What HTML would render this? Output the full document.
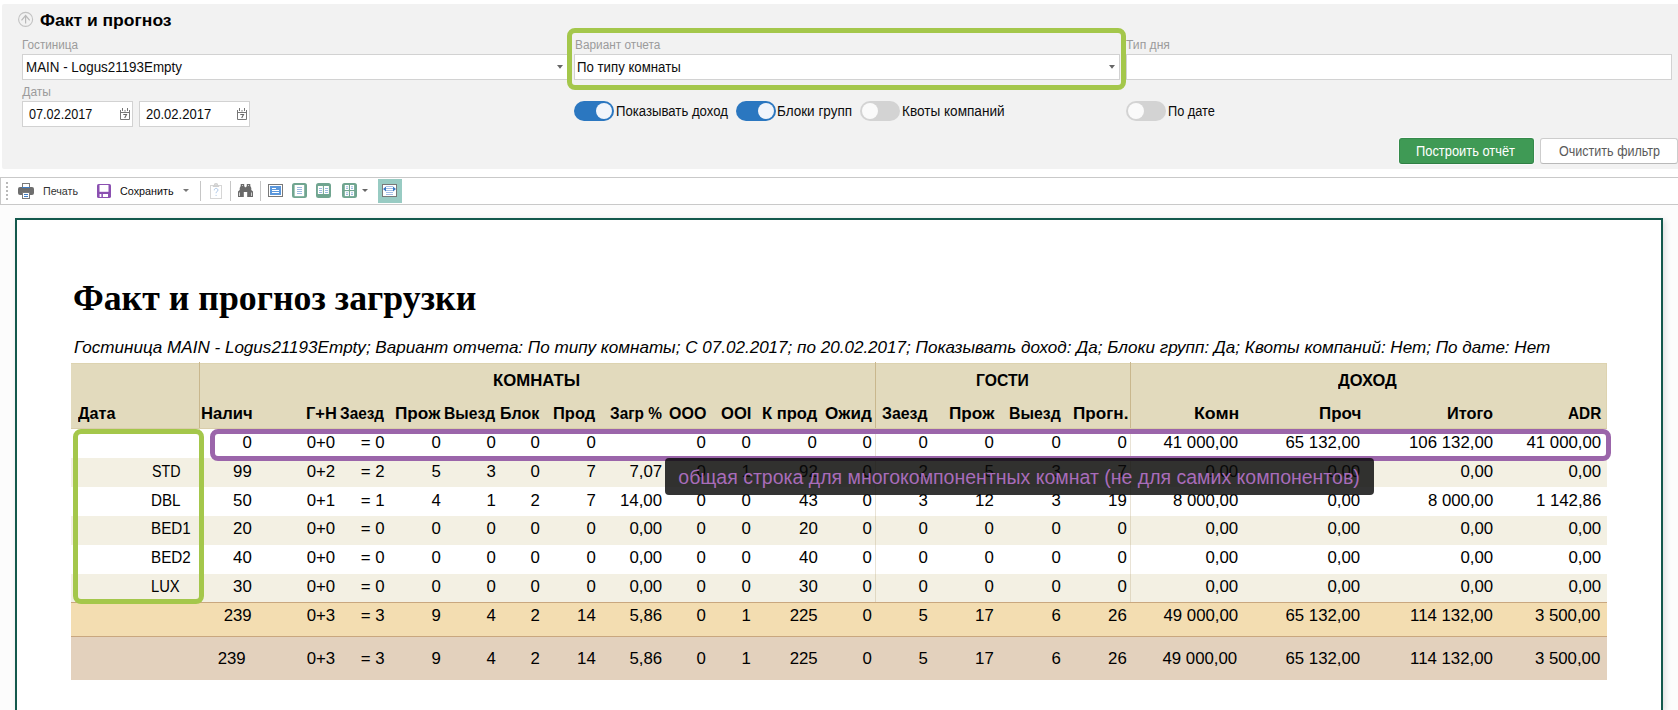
<!DOCTYPE html>
<html lang="ru"><head><meta charset="utf-8"><title>Факт и прогноз</title>
<style>
html,body{margin:0;padding:0;background:#fff;overflow:hidden;}
body{width:1678px;height:710px;overflow:hidden;position:relative;font-family:"Liberation Sans",sans-serif;}
.a{position:absolute;box-sizing:border-box;}
.t{position:absolute;white-space:nowrap;display:inline-block;}
.inp{position:absolute;box-sizing:border-box;background:#fff;border:1px solid #d2d2d2;}
.tog{position:absolute;box-sizing:border-box;width:40px;height:20px;border-radius:10px;}
.tog.on{background:#2b77c0;}
.tog.off{background:#d3d3d3;}
.tog i{position:absolute;top:2px;width:16px;height:16px;border-radius:50%;background:#f1f5fb;}
.tog.on i{right:2px;}
.tog.off i{left:2px;background:#fafafa;}
.row{position:absolute;left:71px;width:1536px;}
.vs{position:absolute;width:1px;}
</style></head><body>

<!-- filter panel -->
<div class="a" style="left:2px;top:4px;width:1676px;height:165px;background:#f2f2f2;border-radius:2px 0 0 2px;"></div>
<svg class="a" style="left:17px;top:11px;" width="17" height="17" viewBox="0 0 17 17"><circle cx="8.600" cy="8.400" r="7" fill="none" stroke="#c2c2c2" stroke-width="1.100"/><path d="M8.600 12.600V4.600M4.500 9.300L8.600 4.500l4.100 4.800" fill="none" stroke="#b9b9b9" stroke-width="1.200"/></svg>

<div class="inp" style="left:22px;top:54px;width:546px;height:26px;"></div>
<div class="inp" style="left:574px;top:54px;width:546px;height:26px;"></div>
<div class="inp" style="left:1126px;top:54px;width:546px;height:26px;"></div>
<div class="inp" style="left:22px;top:101px;width:111px;height:26px;"></div>
<div class="inp" style="left:139px;top:101px;width:111px;height:26px;"></div>
<!-- dropdown arrows -->
<svg class="a" style="left:557px;top:65px;" width="6" height="4"><path d="M0 0h6L3 3.800z" fill="#666"/></svg>
<svg class="a" style="left:1109px;top:65px;" width="6" height="4"><path d="M0 0h6L3 3.800z" fill="#666"/></svg>
<!-- calendar icons -->
<svg class="a" style="left:120px;top:108px;" width="10" height="12" viewBox="0 0 10 12"><path d="M.500 2v9.500h9V2" fill="#fff" stroke="#767676"/><path d="M.500 4.500h9" stroke="#767676"/><path d="M2.500 0v3M7.500 0v3" stroke="#767676"/><rect x="4.500" y="2" width="1" height="1.600" fill="#767676"/><path d="M3.300 6.500h3.200L4.700 10" fill="none" stroke="#666" stroke-width="1.100"/></svg>
<svg class="a" style="left:237px;top:108px;" width="10" height="12" viewBox="0 0 10 12"><path d="M.500 2v9.500h9V2" fill="#fff" stroke="#767676"/><path d="M.500 4.500h9" stroke="#767676"/><path d="M2.500 0v3M7.500 0v3" stroke="#767676"/><rect x="4.500" y="2" width="1" height="1.600" fill="#767676"/><path d="M3.300 6.500h3.200L4.700 10" fill="none" stroke="#666" stroke-width="1.100"/></svg>

<!-- green highlight around variant -->
<div class="a" style="left:567px;top:28px;width:559px;height:62px;border:5px solid #a4c74b;border-radius:8px;"></div>

<!-- toggles -->
<div class="tog on" style="left:574px;top:101px;"><i></i></div>
<div class="tog on" style="left:736px;top:101px;"><i></i></div>
<div class="tog off" style="left:860px;top:101px;"><i></i></div>
<div class="tog off" style="left:1126px;top:101px;"><i></i></div>

<!-- buttons -->
<div class="a" style="left:1399px;top:138px;width:135px;height:26px;background:#3f9a55;border:1px solid #358a4b;border-bottom-color:#2f7f44;border-radius:3px;box-shadow:0 0 0 1px rgba(255,255,255,.55);"></div>
<div class="a" style="left:1540px;top:138px;width:138px;height:26px;background:#fff;border:1px solid #cdcdcd;border-bottom-color:#b9b9b9;border-radius:3px;"></div>

<!-- toolbar -->
<div class="a" style="left:0;top:177px;width:1678px;height:28px;border-top:1px solid #c9c9c9;border-bottom:1px solid #c9c9c9;border-left:1px solid #c9c9c9;background:#fff;"></div>
<!--TB0-->
<!-- drag handle -->
<div class="a" style="left:6px;top:182px;width:2px;height:2px;background:#b9b9b9;box-shadow:0 4px #b9b9b9,0 8px #b9b9b9,0 12px #b9b9b9,0 16px #b9b9b9;"></div>
<!-- printer -->
<svg class="a" style="left:17px;top:182px;" width="18" height="18" viewBox="0 0 18 18">
<rect x="1" y="5" width="16" height="8" rx="2" fill="#6e6e6e"/>
<rect x="5.5" y="1.5" width="7" height="4" fill="#fff" stroke="#7a7a7a"/>
<rect x="5" y="5" width="8" height="1" fill="#3e7cc4"/>
<rect x="5.5" y="10.5" width="7" height="6" fill="#fff" stroke="#7a7a7a"/>
<rect x="7" y="12" width="4" height="1" fill="#3e7cc4"/><rect x="7" y="14" width="4" height="1" fill="#3e7cc4"/>
</svg>
<!-- save -->
<svg class="a" style="left:97px;top:184px;" width="14" height="14" viewBox="0 0 14 14">
<rect x="0" y="0" width="14" height="14" rx="1.6" fill="#8b50b1"/>
<rect x="2.5" y="1" width="9" height="6.8" fill="#fff"/>
<rect x="2.6" y="10" width="8.4" height="3" fill="#fff"/>
<rect x="4.4" y="10" width="1.5" height="3" fill="#8b50b1"/>
</svg>
<svg class="a" style="left:182.5px;top:189px;" width="6" height="3"><path d="M0 0h6L3 3z" fill="#777"/></svg>
<!-- separators -->
<div class="vs" style="left:200px;top:181px;height:20px;background:#c6c6c6;"></div>
<div class="vs" style="left:230px;top:181px;height:20px;background:#c6c6c6;"></div>
<div class="vs" style="left:260px;top:181px;height:20px;background:#c6c6c6;"></div>
<!-- clipboard (disabled) -->
<svg class="a" style="left:209px;top:182px;" width="14" height="18" viewBox="0 0 14 18">
<rect x="1.5" y="3.5" width="11" height="13" fill="#fff" stroke="#d6d6d6"/>
<path d="M3.800 4.300h6.400M5.500 3.300a1.500 1.500 0 0 1 3 0" fill="none" stroke="#cfcfcf" stroke-width="1.400"/>
<path d="M5.3 8.3c0-1.3.8-1.9 1.8-1.9s1.8.7 1.8 1.7c0 1.400-1.800 1.500-1.800 3.100M7.100 12.900v1" fill="none" stroke="#a9c5e8" stroke-width="1"/>
</svg>
<!-- binoculars -->
<svg class="a" style="left:238px;top:184px;" width="15" height="13" viewBox="0 0 15 13">
<path d="M2.700 0h3.500v2l.800 1.300h1l.800-1.300V0h3.500v2l1 2v2l1.700 1.500V13H9.200V8H5.800v5H0V7.500L1.700 6V4l1-2z" fill="#6a6a6a"/>
<rect x="1" y="8.500" width="1" height="3.500" fill="#d0d0d0"/><rect x="13" y="8.500" width="1" height="3.500" fill="#d0d0d0"/>
<rect x="4" y="1" width="1" height="1" fill="#ccc"/><rect x="10" y="1" width="1" height="1" fill="#ccc"/>
</svg>
<!-- icon1 -->
<svg class="a" style="left:268px;top:184px;" width="15" height="13" viewBox="0 0 15 13">
<rect x=".5" y=".5" width="14" height="12" fill="#fff" stroke="#787878"/>
<rect x="2" y="2" width="11" height="9" fill="#5b97db"/>
<rect x="4" y="4" width="4" height="1" fill="#fff"/><rect x="4" y="6" width="7" height="1" fill="#fff"/><rect x="4" y="8" width="7" height="1" fill="#fff"/>
</svg>
<!-- icon2 -->
<svg class="a" style="left:292px;top:183px;" width="15" height="15" viewBox="0 0 15 15">
<rect width="15" height="15" rx="2.500" fill="#70a590"/>
<rect x="2.600" y="2" width="9.600" height="11.200" fill="#fff"/>
<g fill="#9bb9e0"><rect x="5" y="4" width="5" height="1"/><rect x="5" y="6" width="5" height="1"/><rect x="5" y="8" width="5" height="1"/><rect x="5" y="10" width="5" height="1"/></g>
</svg>
<!-- icon3 -->
<svg class="a" style="left:316px;top:183px;" width="15" height="15" viewBox="0 0 15 15">
<rect width="15" height="15" rx="2.500" fill="#70a590"/>
<rect x="1.900" y="3" width="5" height="8" fill="#fff"/><rect x="7.900" y="3" width="5" height="8" fill="#fff"/>
<g fill="#9bb9e0"><rect x="3" y="5" width="3" height="1"/><rect x="3" y="7" width="3" height="1"/><rect x="3" y="9" width="3" height="1"/><rect x="9" y="5" width="3" height="1"/><rect x="9" y="7" width="3" height="1"/><rect x="9" y="9" width="3" height="1"/></g>
</svg>
<!-- icon4 -->
<svg class="a" style="left:342px;top:183px;" width="15" height="15" viewBox="0 0 15 15">
<rect width="15" height="15" rx="2.500" fill="#70a590"/>
<rect x="2.800" y="2" width="4.100" height="5" fill="#fff"/><rect x="8" y="2" width="4.100" height="5" fill="#fff"/>
<rect x="2.800" y="8.100" width="4.100" height="5" fill="#fff"/><rect x="8" y="8.100" width="4.100" height="5" fill="#fff"/>
<g fill="#9bb9e0"><rect x="4" y="3.300" width="2" height="1"/><rect x="4" y="5" width="2" height="1"/><rect x="9" y="3.300" width="2" height="1"/><rect x="9" y="5" width="2" height="1"/>
<rect x="4" y="9.300" width="2" height="1"/><rect x="4" y="11" width="2" height="1"/><rect x="9" y="9.300" width="2" height="1"/><rect x="9" y="11" width="2" height="1"/></g>
</svg>
<svg class="a" style="left:362px;top:189px;" width="6" height="3"><path d="M0 0h6L3 3z" fill="#666"/></svg>
<!-- icon5 highlighted -->
<div class="a" style="left:378px;top:179px;width:24px;height:24px;background:#98cbc3;"></div>
<svg class="a" style="left:382px;top:184px;" width="15" height="13" viewBox="0 0 15 13">
<rect x=".5" y=".5" width="14" height="12" fill="#fff" stroke="#787878"/>
<g fill="#a5bfe6"><rect x="4" y="2" width="7" height="1"/><rect x="3" y="4" width="9" height="1"/><rect x="3" y="6" width="9" height="1"/><rect x="4" y="8" width="7" height="1"/><rect x="4" y="10" width="7" height="1"/></g>
<path d="M1 5l3-2.500v5zM14 5l-3-2.500v5z" fill="#3a78c2"/>
</svg>
<!--TB1-->

<!-- report frame -->
<div class="a" style="left:0;top:205px;width:1678px;height:505px;background:#fcfcfc;"></div>
<div class="a" style="left:15px;top:218px;width:1648px;height:492px;border:2px solid #14594d;border-bottom:none;background:#fff;box-shadow:2px 2px 6px rgba(0,0,0,.13);"></div>

<!-- table backgrounds -->
<div class="row" style="top:363px;height:66px;background:#e2dabd;box-shadow:inset -1px 1px 0 #ddd3b0;"></div>
<div class="row" style="top:458px;height:29px;background:#f3f0e3;"></div>
<div class="row" style="top:516px;height:29px;background:#f3f0e3;"></div>
<div class="row" style="top:574px;height:28px;background:#f3f0e3;"></div>
<div class="row" style="top:602px;height:34px;background:#f3ddb1;border-top:1px solid #c9a77f;box-sizing:border-box;"></div>
<div class="row" style="top:636px;height:44px;background:#e3d1bd;border-top:1px solid #c9a77f;box-sizing:border-box;"></div>
<!-- vertical separators -->
<div class="vs" style="left:199px;top:362px;height:67px;background:#c9b78d;"></div>
<div class="vs" style="left:199px;top:429px;height:173px;background:rgba(176,156,106,.28);"></div>
<div class="vs" style="left:875px;top:362px;height:67px;background:#c9b78d;"></div>
<div class="vs" style="left:875px;top:429px;height:173px;background:rgba(176,156,106,.28);"></div>
<div class="vs" style="left:1130px;top:362px;height:67px;background:#c9b78d;"></div>
<div class="vs" style="left:1130px;top:429px;height:173px;background:rgba(176,156,106,.28);"></div>
<div class="a" style="left:71px;top:428px;width:1536px;height:1px;background:#d9cdaa;"></div>

<!-- highlight boxes -->
<div class="a" style="left:73px;top:429px;width:131px;height:175px;border:5px solid #a4c74b;border-radius:8px;z-index:3;"></div>
<div class="a" style="left:210px;top:429px;width:1401px;height:32px;border:5px solid #9b65aa;border-radius:8px;z-index:3;"></div>

<!-- tooltip -->
<div class="a" style="left:665px;top:458px;width:709px;height:37px;background:rgba(10,10,10,0.83);border-radius:4px;z-index:5;"></div>

<span class="t" style="top:11px;font:normal bold 17px/19px 'Liberation Sans', sans-serif;color:#000;left:39.80px;transform-origin:0 50%;transform:scaleX(1.0303);">Факт и прогноз</span>
<span class="t" style="top:38px;font:normal normal 12px/14px 'Liberation Sans', sans-serif;color:#9b9b9b;left:22.30px;transform-origin:0 50%;transform:scaleX(0.9763);">Гостиница</span>
<span class="t" style="top:38px;font:normal normal 12px/14px 'Liberation Sans', sans-serif;color:#9b9b9b;left:574.50px;transform-origin:0 50%;transform:scaleX(0.9853);">Вариант отчета</span>
<span class="t" style="top:38px;font:normal normal 12px/14px 'Liberation Sans', sans-serif;color:#9b9b9b;left:1126.20px;transform-origin:0 50%;transform:scaleX(1.0101);">Тип дня</span>
<span class="t" style="top:85px;font:normal normal 12px/14px 'Liberation Sans', sans-serif;color:#9b9b9b;left:22.30px;transform-origin:0 50%;">Даты</span>
<span class="t" style="top:59px;font:normal normal 14px/16px 'Liberation Sans', sans-serif;color:#0c0c0c;left:25.64px;transform-origin:0 50%;transform:scaleX(0.9553);">MAIN - Logus21193Empty</span>
<span class="t" style="top:59px;font:normal normal 14px/16px 'Liberation Sans', sans-serif;color:#0c0c0c;left:577.36px;transform-origin:0 50%;transform:scaleX(0.9443);">По типу комнаты</span>
<span class="t" style="top:106px;font:normal normal 14px/16px 'Liberation Sans', sans-serif;color:#0c0c0c;left:28.60px;transform-origin:0 50%;transform:scaleX(0.9035);">07.02.2017</span>
<span class="t" style="top:106px;font:normal normal 14px/16px 'Liberation Sans', sans-serif;color:#0c0c0c;left:145.60px;transform-origin:0 50%;transform:scaleX(0.9305);">20.02.2017</span>
<span class="t" style="top:103px;font:normal normal 14px/16px 'Liberation Sans', sans-serif;color:#0c0c0c;left:615.76px;transform-origin:0 50%;transform:scaleX(0.9401);">Показывать доход</span>
<span class="t" style="top:103px;font:normal normal 14px/16px 'Liberation Sans', sans-serif;color:#0c0c0c;left:777.24px;transform-origin:0 50%;transform:scaleX(0.9634);">Блоки групп</span>
<span class="t" style="top:103px;font:normal normal 14px/16px 'Liberation Sans', sans-serif;color:#0c0c0c;left:901.73px;transform-origin:0 50%;transform:scaleX(0.9703);">Квоты компаний</span>
<span class="t" style="top:103px;font:normal normal 14px/16px 'Liberation Sans', sans-serif;color:#0c0c0c;left:1167.99px;transform-origin:0 50%;transform:scaleX(0.9123);">По дате</span>
<span class="t" style="top:143px;font:normal normal 14px/16px 'Liberation Sans', sans-serif;color:#fff;left:1416.38px;transform-origin:0 50%;transform:scaleX(0.9196);">Построить отчёт</span>
<span class="t" style="top:143px;font:normal normal 14px/16px 'Liberation Sans', sans-serif;color:#5a5a5a;left:1558.50px;transform-origin:0 50%;transform:scaleX(0.8968);">Очистить фильтр</span>
<span class="t" style="top:185px;font:normal normal 11px/12px 'Liberation Sans', sans-serif;color:#333;left:42.50px;transform-origin:0 50%;transform:scaleX(0.9724);">Печать</span>
<span class="t" style="top:185px;font:normal normal 11px/12px 'Liberation Sans', sans-serif;color:#0c0c0c;left:120.00px;transform-origin:0 50%;transform:scaleX(0.9794);">Сохранить</span>
<span class="t" style="top:278px;font:normal bold 36px/40px 'Liberation Serif', serif;color:#000;left:73.31px;transform-origin:0 50%;transform:scaleX(0.9939);">Факт и прогноз загрузки</span>
<span class="t" style="top:338px;font:italic normal 17px/19px 'Liberation Sans', sans-serif;color:#000;left:74.00px;transform-origin:0 50%;transform:scaleX(1.0035);">Гостиница MAIN - Logus21193Empty; Вариант отчета: По типу комнаты; С 07.02.2017; по 20.02.2017; Показывать доход: Да; Блоки групп: Да; Квоты компаний: Нет; По дате: Нет</span>
<span class="t" style="top:371px;font:normal bold 16.5px/18px 'Liberation Sans', sans-serif;color:#000;left:492.99px;transform-origin:0 50%;transform:scaleX(1.0149);">КОМНАТЫ</span>
<span class="t" style="top:371px;font:normal bold 16.5px/18px 'Liberation Sans', sans-serif;color:#000;left:976.05px;transform-origin:0 50%;transform:scaleX(0.9523);">ГОСТИ</span>
<span class="t" style="top:371px;font:normal bold 16.5px/18px 'Liberation Sans', sans-serif;color:#000;left:1338.00px;transform-origin:0 50%;transform:scaleX(0.9974);">ДОХОД</span>
<span class="t" style="top:404px;font:normal bold 16.5px/18px 'Liberation Sans', sans-serif;color:#000;left:77.60px;transform-origin:0 50%;transform:scaleX(0.9792);">Дата</span>
<span class="t" style="top:404px;font:normal bold 16.5px/18px 'Liberation Sans', sans-serif;color:#000;left:200.99px;transform-origin:0 50%;transform:scaleX(1.0057);">Налич</span>
<span class="t" style="top:404px;font:normal bold 16.5px/18px 'Liberation Sans', sans-serif;color:#000;left:305.50px;transform-origin:0 50%;transform:scaleX(0.9969);">Г+Н</span>
<span class="t" style="top:404px;font:normal bold 16.5px/18px 'Liberation Sans', sans-serif;color:#000;left:339.80px;transform-origin:0 50%;transform:scaleX(0.9313);">Заезд</span>
<span class="t" style="top:404px;font:normal bold 16.5px/18px 'Liberation Sans', sans-serif;color:#000;left:394.56px;transform-origin:0 50%;transform:scaleX(1.0421);">Прож</span>
<span class="t" style="top:404px;font:normal bold 16.5px/18px 'Liberation Sans', sans-serif;color:#000;left:444.35px;transform-origin:0 50%;transform:scaleX(0.9497);">Выезд</span>
<span class="t" style="top:404px;font:normal bold 16.5px/18px 'Liberation Sans', sans-serif;color:#000;left:500.03px;transform-origin:0 50%;transform:scaleX(0.9701);">Блок</span>
<span class="t" style="top:404px;font:normal bold 16.5px/18px 'Liberation Sans', sans-serif;color:#000;left:553.00px;transform-origin:0 50%;transform:scaleX(0.9976);">Прод</span>
<span class="t" style="top:404px;font:normal bold 16.5px/18px 'Liberation Sans', sans-serif;color:#000;left:609.70px;transform-origin:0 50%;transform:scaleX(0.9331);">Загр %</span>
<span class="t" style="top:404px;font:normal bold 16.5px/18px 'Liberation Sans', sans-serif;color:#000;left:668.80px;transform-origin:0 50%;transform:scaleX(0.9698);">ООО</span>
<span class="t" style="top:404px;font:normal bold 16.5px/18px 'Liberation Sans', sans-serif;color:#000;left:721.20px;transform-origin:0 50%;transform:scaleX(1.0044);">OOI</span>
<span class="t" style="top:404px;font:normal bold 16.5px/18px 'Liberation Sans', sans-serif;color:#000;left:761.80px;transform-origin:0 50%;transform:scaleX(1.0025);">К прод</span>
<span class="t" style="top:404px;font:normal bold 16.5px/18px 'Liberation Sans', sans-serif;color:#000;left:825.30px;transform-origin:0 50%;transform:scaleX(1.0356);">Ожид</span>
<span class="t" style="top:404px;font:normal bold 16.5px/18px 'Liberation Sans', sans-serif;color:#000;left:881.70px;transform-origin:0 50%;transform:scaleX(0.9605);">Заезд</span>
<span class="t" style="top:404px;font:normal bold 16.5px/18px 'Liberation Sans', sans-serif;color:#000;left:948.66px;transform-origin:0 50%;transform:scaleX(1.0421);">Прож</span>
<span class="t" style="top:404px;font:normal bold 16.5px/18px 'Liberation Sans', sans-serif;color:#000;left:1008.54px;transform-origin:0 50%;transform:scaleX(0.9609);">Выезд</span>
<span class="t" style="top:404px;font:normal bold 16.5px/18px 'Liberation Sans', sans-serif;color:#000;left:1072.66px;transform-origin:0 50%;transform:scaleX(1.0375);">Прогн.</span>
<span class="t" style="top:404px;font:normal bold 16.5px/18px 'Liberation Sans', sans-serif;color:#000;left:1194.32px;transform-origin:0 50%;transform:scaleX(1.0763);">Комн</span>
<span class="t" style="top:404px;font:normal bold 16.5px/18px 'Liberation Sans', sans-serif;color:#000;left:1318.97px;transform-origin:0 50%;transform:scaleX(1.0251);">Проч</span>
<span class="t" style="top:404px;font:normal bold 16.5px/18px 'Liberation Sans', sans-serif;color:#000;left:1447.01px;transform-origin:0 50%;transform:scaleX(0.9900);">Итого</span>
<span class="t" style="top:404px;font:normal bold 16.5px/18px 'Liberation Sans', sans-serif;color:#000;left:1568.00px;transform-origin:0 50%;transform:scaleX(0.9293);">ADR</span>
<span class="t" style="top:434px;font:normal normal 16px/17px 'Liberation Sans', sans-serif;color:#000;right:1426.51px;transform-origin:100% 50%;transform:scaleX(1.0500);">0</span>
<span class="t" style="top:434px;font:normal normal 16px/17px 'Liberation Sans', sans-serif;color:#000;right:1342.71px;transform-origin:100% 50%;transform:scaleX(1.0500);">0+0</span>
<span class="t" style="top:434px;font:normal normal 16px/17px 'Liberation Sans', sans-serif;color:#000;right:1293.71px;transform-origin:100% 50%;transform:scaleX(1.0500);">= 0</span>
<span class="t" style="top:434px;font:normal normal 16px/17px 'Liberation Sans', sans-serif;color:#000;right:1237.51px;transform-origin:100% 50%;transform:scaleX(1.0500);">0</span>
<span class="t" style="top:434px;font:normal normal 16px/17px 'Liberation Sans', sans-serif;color:#000;right:1182.11px;transform-origin:100% 50%;transform:scaleX(1.0500);">0</span>
<span class="t" style="top:434px;font:normal normal 16px/17px 'Liberation Sans', sans-serif;color:#000;right:1138.11px;transform-origin:100% 50%;transform:scaleX(1.0500);">0</span>
<span class="t" style="top:434px;font:normal normal 16px/17px 'Liberation Sans', sans-serif;color:#000;right:1082.41px;transform-origin:100% 50%;transform:scaleX(1.0500);">0</span>
<span class="t" style="top:434px;font:normal normal 16px/17px 'Liberation Sans', sans-serif;color:#000;right:971.81px;transform-origin:100% 50%;transform:scaleX(1.0500);">0</span>
<span class="t" style="top:434px;font:normal normal 16px/17px 'Liberation Sans', sans-serif;color:#000;right:927.11px;transform-origin:100% 50%;transform:scaleX(1.0500);">0</span>
<span class="t" style="top:434px;font:normal normal 16px/17px 'Liberation Sans', sans-serif;color:#000;right:860.61px;transform-origin:100% 50%;transform:scaleX(1.0500);">0</span>
<span class="t" style="top:434px;font:normal normal 16px/17px 'Liberation Sans', sans-serif;color:#000;right:806.11px;transform-origin:100% 50%;transform:scaleX(1.0500);">0</span>
<span class="t" style="top:434px;font:normal normal 16px/17px 'Liberation Sans', sans-serif;color:#000;right:750.41px;transform-origin:100% 50%;transform:scaleX(1.0500);">0</span>
<span class="t" style="top:434px;font:normal normal 16px/17px 'Liberation Sans', sans-serif;color:#000;right:683.81px;transform-origin:100% 50%;transform:scaleX(1.0500);">0</span>
<span class="t" style="top:434px;font:normal normal 16px/17px 'Liberation Sans', sans-serif;color:#000;right:617.31px;transform-origin:100% 50%;transform:scaleX(1.0500);">0</span>
<span class="t" style="top:434px;font:normal normal 16px/17px 'Liberation Sans', sans-serif;color:#000;right:551.11px;transform-origin:100% 50%;transform:scaleX(1.0500);">0</span>
<span class="t" style="top:434px;font:normal normal 16px/17px 'Liberation Sans', sans-serif;color:#000;right:439.51px;transform-origin:100% 50%;transform:scaleX(1.0500);">41 000,00</span>
<span class="t" style="top:434px;font:normal normal 16px/17px 'Liberation Sans', sans-serif;color:#000;right:317.51px;transform-origin:100% 50%;transform:scaleX(1.0500);">65 132,00</span>
<span class="t" style="top:434px;font:normal normal 16px/17px 'Liberation Sans', sans-serif;color:#000;right:185.11px;transform-origin:100% 50%;transform:scaleX(1.0500);">106 132,00</span>
<span class="t" style="top:434px;font:normal normal 16px/17px 'Liberation Sans', sans-serif;color:#000;right:76.81px;transform-origin:100% 50%;transform:scaleX(1.0500);">41 000,00</span>
<span class="t" style="top:463px;font:normal normal 16px/17px 'Liberation Sans', sans-serif;color:#000;left:151.90px;transform-origin:0 50%;transform:scaleX(0.8936);">STD</span>
<span class="t" style="top:463px;font:normal normal 16px/17px 'Liberation Sans', sans-serif;color:#000;right:1426.51px;transform-origin:100% 50%;transform:scaleX(1.0500);">99</span>
<span class="t" style="top:463px;font:normal normal 16px/17px 'Liberation Sans', sans-serif;color:#000;right:1342.71px;transform-origin:100% 50%;transform:scaleX(1.0500);">0+2</span>
<span class="t" style="top:463px;font:normal normal 16px/17px 'Liberation Sans', sans-serif;color:#000;right:1293.71px;transform-origin:100% 50%;transform:scaleX(1.0500);">= 2</span>
<span class="t" style="top:463px;font:normal normal 16px/17px 'Liberation Sans', sans-serif;color:#000;right:1237.51px;transform-origin:100% 50%;transform:scaleX(1.0500);">5</span>
<span class="t" style="top:463px;font:normal normal 16px/17px 'Liberation Sans', sans-serif;color:#000;right:1182.11px;transform-origin:100% 50%;transform:scaleX(1.0500);">3</span>
<span class="t" style="top:463px;font:normal normal 16px/17px 'Liberation Sans', sans-serif;color:#000;right:1138.11px;transform-origin:100% 50%;transform:scaleX(1.0500);">0</span>
<span class="t" style="top:463px;font:normal normal 16px/17px 'Liberation Sans', sans-serif;color:#000;right:1082.41px;transform-origin:100% 50%;transform:scaleX(1.0500);">7</span>
<span class="t" style="top:463px;font:normal normal 16px/17px 'Liberation Sans', sans-serif;color:#000;right:1016.11px;transform-origin:100% 50%;transform:scaleX(1.0500);">7,07</span>
<span class="t" style="top:463px;font:normal normal 16px/17px 'Liberation Sans', sans-serif;color:#000;right:971.81px;transform-origin:100% 50%;transform:scaleX(1.0500);">0</span>
<span class="t" style="top:463px;font:normal normal 16px/17px 'Liberation Sans', sans-serif;color:#000;right:927.11px;transform-origin:100% 50%;transform:scaleX(1.0500);">1</span>
<span class="t" style="top:463px;font:normal normal 16px/17px 'Liberation Sans', sans-serif;color:#000;right:860.61px;transform-origin:100% 50%;transform:scaleX(1.0500);">92</span>
<span class="t" style="top:463px;font:normal normal 16px/17px 'Liberation Sans', sans-serif;color:#000;right:806.11px;transform-origin:100% 50%;transform:scaleX(1.0500);">0</span>
<span class="t" style="top:463px;font:normal normal 16px/17px 'Liberation Sans', sans-serif;color:#000;right:750.41px;transform-origin:100% 50%;transform:scaleX(1.0500);">2</span>
<span class="t" style="top:463px;font:normal normal 16px/17px 'Liberation Sans', sans-serif;color:#000;right:683.81px;transform-origin:100% 50%;transform:scaleX(1.0500);">5</span>
<span class="t" style="top:463px;font:normal normal 16px/17px 'Liberation Sans', sans-serif;color:#000;right:617.31px;transform-origin:100% 50%;transform:scaleX(1.0500);">3</span>
<span class="t" style="top:463px;font:normal normal 16px/17px 'Liberation Sans', sans-serif;color:#000;right:551.11px;transform-origin:100% 50%;transform:scaleX(1.0500);">7</span>
<span class="t" style="top:463px;font:normal normal 16px/17px 'Liberation Sans', sans-serif;color:#000;right:439.51px;transform-origin:100% 50%;transform:scaleX(1.0500);">0,00</span>
<span class="t" style="top:463px;font:normal normal 16px/17px 'Liberation Sans', sans-serif;color:#000;right:317.51px;transform-origin:100% 50%;transform:scaleX(1.0500);">0,00</span>
<span class="t" style="top:463px;font:normal normal 16px/17px 'Liberation Sans', sans-serif;color:#000;right:185.11px;transform-origin:100% 50%;transform:scaleX(1.0500);">0,00</span>
<span class="t" style="top:463px;font:normal normal 16px/17px 'Liberation Sans', sans-serif;color:#000;right:76.81px;transform-origin:100% 50%;transform:scaleX(1.0500);">0,00</span>
<span class="t" style="top:492px;font:normal normal 16px/17px 'Liberation Sans', sans-serif;color:#000;left:150.95px;transform-origin:0 50%;transform:scaleX(0.9495);">DBL</span>
<span class="t" style="top:492px;font:normal normal 16px/17px 'Liberation Sans', sans-serif;color:#000;right:1426.51px;transform-origin:100% 50%;transform:scaleX(1.0500);">50</span>
<span class="t" style="top:492px;font:normal normal 16px/17px 'Liberation Sans', sans-serif;color:#000;right:1342.71px;transform-origin:100% 50%;transform:scaleX(1.0500);">0+1</span>
<span class="t" style="top:492px;font:normal normal 16px/17px 'Liberation Sans', sans-serif;color:#000;right:1293.71px;transform-origin:100% 50%;transform:scaleX(1.0500);">= 1</span>
<span class="t" style="top:492px;font:normal normal 16px/17px 'Liberation Sans', sans-serif;color:#000;right:1237.51px;transform-origin:100% 50%;transform:scaleX(1.0500);">4</span>
<span class="t" style="top:492px;font:normal normal 16px/17px 'Liberation Sans', sans-serif;color:#000;right:1182.11px;transform-origin:100% 50%;transform:scaleX(1.0500);">1</span>
<span class="t" style="top:492px;font:normal normal 16px/17px 'Liberation Sans', sans-serif;color:#000;right:1138.11px;transform-origin:100% 50%;transform:scaleX(1.0500);">2</span>
<span class="t" style="top:492px;font:normal normal 16px/17px 'Liberation Sans', sans-serif;color:#000;right:1082.41px;transform-origin:100% 50%;transform:scaleX(1.0500);">7</span>
<span class="t" style="top:492px;font:normal normal 16px/17px 'Liberation Sans', sans-serif;color:#000;right:1016.11px;transform-origin:100% 50%;transform:scaleX(1.0500);">14,00</span>
<span class="t" style="top:492px;font:normal normal 16px/17px 'Liberation Sans', sans-serif;color:#000;right:971.81px;transform-origin:100% 50%;transform:scaleX(1.0500);">0</span>
<span class="t" style="top:492px;font:normal normal 16px/17px 'Liberation Sans', sans-serif;color:#000;right:927.11px;transform-origin:100% 50%;transform:scaleX(1.0500);">0</span>
<span class="t" style="top:492px;font:normal normal 16px/17px 'Liberation Sans', sans-serif;color:#000;right:860.61px;transform-origin:100% 50%;transform:scaleX(1.0500);">43</span>
<span class="t" style="top:492px;font:normal normal 16px/17px 'Liberation Sans', sans-serif;color:#000;right:806.11px;transform-origin:100% 50%;transform:scaleX(1.0500);">0</span>
<span class="t" style="top:492px;font:normal normal 16px/17px 'Liberation Sans', sans-serif;color:#000;right:750.41px;transform-origin:100% 50%;transform:scaleX(1.0500);">3</span>
<span class="t" style="top:492px;font:normal normal 16px/17px 'Liberation Sans', sans-serif;color:#000;right:683.81px;transform-origin:100% 50%;transform:scaleX(1.0500);">12</span>
<span class="t" style="top:492px;font:normal normal 16px/17px 'Liberation Sans', sans-serif;color:#000;right:617.31px;transform-origin:100% 50%;transform:scaleX(1.0500);">3</span>
<span class="t" style="top:492px;font:normal normal 16px/17px 'Liberation Sans', sans-serif;color:#000;right:551.11px;transform-origin:100% 50%;transform:scaleX(1.0500);">19</span>
<span class="t" style="top:492px;font:normal normal 16px/17px 'Liberation Sans', sans-serif;color:#000;right:439.51px;transform-origin:100% 50%;transform:scaleX(1.0500);">8 000,00</span>
<span class="t" style="top:492px;font:normal normal 16px/17px 'Liberation Sans', sans-serif;color:#000;right:317.51px;transform-origin:100% 50%;transform:scaleX(1.0500);">0,00</span>
<span class="t" style="top:492px;font:normal normal 16px/17px 'Liberation Sans', sans-serif;color:#000;right:185.11px;transform-origin:100% 50%;transform:scaleX(1.0500);">8 000,00</span>
<span class="t" style="top:492px;font:normal normal 16px/17px 'Liberation Sans', sans-serif;color:#000;right:76.81px;transform-origin:100% 50%;transform:scaleX(1.0500);">1 142,86</span>
<span class="t" style="top:520px;font:normal normal 16px/17px 'Liberation Sans', sans-serif;color:#000;left:150.95px;transform-origin:0 50%;transform:scaleX(0.9511);">BED1</span>
<span class="t" style="top:520px;font:normal normal 16px/17px 'Liberation Sans', sans-serif;color:#000;right:1426.51px;transform-origin:100% 50%;transform:scaleX(1.0500);">20</span>
<span class="t" style="top:520px;font:normal normal 16px/17px 'Liberation Sans', sans-serif;color:#000;right:1342.71px;transform-origin:100% 50%;transform:scaleX(1.0500);">0+0</span>
<span class="t" style="top:520px;font:normal normal 16px/17px 'Liberation Sans', sans-serif;color:#000;right:1293.71px;transform-origin:100% 50%;transform:scaleX(1.0500);">= 0</span>
<span class="t" style="top:520px;font:normal normal 16px/17px 'Liberation Sans', sans-serif;color:#000;right:1237.51px;transform-origin:100% 50%;transform:scaleX(1.0500);">0</span>
<span class="t" style="top:520px;font:normal normal 16px/17px 'Liberation Sans', sans-serif;color:#000;right:1182.11px;transform-origin:100% 50%;transform:scaleX(1.0500);">0</span>
<span class="t" style="top:520px;font:normal normal 16px/17px 'Liberation Sans', sans-serif;color:#000;right:1138.11px;transform-origin:100% 50%;transform:scaleX(1.0500);">0</span>
<span class="t" style="top:520px;font:normal normal 16px/17px 'Liberation Sans', sans-serif;color:#000;right:1082.41px;transform-origin:100% 50%;transform:scaleX(1.0500);">0</span>
<span class="t" style="top:520px;font:normal normal 16px/17px 'Liberation Sans', sans-serif;color:#000;right:1016.11px;transform-origin:100% 50%;transform:scaleX(1.0500);">0,00</span>
<span class="t" style="top:520px;font:normal normal 16px/17px 'Liberation Sans', sans-serif;color:#000;right:971.81px;transform-origin:100% 50%;transform:scaleX(1.0500);">0</span>
<span class="t" style="top:520px;font:normal normal 16px/17px 'Liberation Sans', sans-serif;color:#000;right:927.11px;transform-origin:100% 50%;transform:scaleX(1.0500);">0</span>
<span class="t" style="top:520px;font:normal normal 16px/17px 'Liberation Sans', sans-serif;color:#000;right:860.61px;transform-origin:100% 50%;transform:scaleX(1.0500);">20</span>
<span class="t" style="top:520px;font:normal normal 16px/17px 'Liberation Sans', sans-serif;color:#000;right:806.11px;transform-origin:100% 50%;transform:scaleX(1.0500);">0</span>
<span class="t" style="top:520px;font:normal normal 16px/17px 'Liberation Sans', sans-serif;color:#000;right:750.41px;transform-origin:100% 50%;transform:scaleX(1.0500);">0</span>
<span class="t" style="top:520px;font:normal normal 16px/17px 'Liberation Sans', sans-serif;color:#000;right:683.81px;transform-origin:100% 50%;transform:scaleX(1.0500);">0</span>
<span class="t" style="top:520px;font:normal normal 16px/17px 'Liberation Sans', sans-serif;color:#000;right:617.31px;transform-origin:100% 50%;transform:scaleX(1.0500);">0</span>
<span class="t" style="top:520px;font:normal normal 16px/17px 'Liberation Sans', sans-serif;color:#000;right:551.11px;transform-origin:100% 50%;transform:scaleX(1.0500);">0</span>
<span class="t" style="top:520px;font:normal normal 16px/17px 'Liberation Sans', sans-serif;color:#000;right:439.51px;transform-origin:100% 50%;transform:scaleX(1.0500);">0,00</span>
<span class="t" style="top:520px;font:normal normal 16px/17px 'Liberation Sans', sans-serif;color:#000;right:317.51px;transform-origin:100% 50%;transform:scaleX(1.0500);">0,00</span>
<span class="t" style="top:520px;font:normal normal 16px/17px 'Liberation Sans', sans-serif;color:#000;right:185.11px;transform-origin:100% 50%;transform:scaleX(1.0500);">0,00</span>
<span class="t" style="top:520px;font:normal normal 16px/17px 'Liberation Sans', sans-serif;color:#000;right:76.81px;transform-origin:100% 50%;transform:scaleX(1.0500);">0,00</span>
<span class="t" style="top:549px;font:normal normal 16px/17px 'Liberation Sans', sans-serif;color:#000;left:150.95px;transform-origin:0 50%;transform:scaleX(0.9511);">BED2</span>
<span class="t" style="top:549px;font:normal normal 16px/17px 'Liberation Sans', sans-serif;color:#000;right:1426.51px;transform-origin:100% 50%;transform:scaleX(1.0500);">40</span>
<span class="t" style="top:549px;font:normal normal 16px/17px 'Liberation Sans', sans-serif;color:#000;right:1342.71px;transform-origin:100% 50%;transform:scaleX(1.0500);">0+0</span>
<span class="t" style="top:549px;font:normal normal 16px/17px 'Liberation Sans', sans-serif;color:#000;right:1293.71px;transform-origin:100% 50%;transform:scaleX(1.0500);">= 0</span>
<span class="t" style="top:549px;font:normal normal 16px/17px 'Liberation Sans', sans-serif;color:#000;right:1237.51px;transform-origin:100% 50%;transform:scaleX(1.0500);">0</span>
<span class="t" style="top:549px;font:normal normal 16px/17px 'Liberation Sans', sans-serif;color:#000;right:1182.11px;transform-origin:100% 50%;transform:scaleX(1.0500);">0</span>
<span class="t" style="top:549px;font:normal normal 16px/17px 'Liberation Sans', sans-serif;color:#000;right:1138.11px;transform-origin:100% 50%;transform:scaleX(1.0500);">0</span>
<span class="t" style="top:549px;font:normal normal 16px/17px 'Liberation Sans', sans-serif;color:#000;right:1082.41px;transform-origin:100% 50%;transform:scaleX(1.0500);">0</span>
<span class="t" style="top:549px;font:normal normal 16px/17px 'Liberation Sans', sans-serif;color:#000;right:1016.11px;transform-origin:100% 50%;transform:scaleX(1.0500);">0,00</span>
<span class="t" style="top:549px;font:normal normal 16px/17px 'Liberation Sans', sans-serif;color:#000;right:971.81px;transform-origin:100% 50%;transform:scaleX(1.0500);">0</span>
<span class="t" style="top:549px;font:normal normal 16px/17px 'Liberation Sans', sans-serif;color:#000;right:927.11px;transform-origin:100% 50%;transform:scaleX(1.0500);">0</span>
<span class="t" style="top:549px;font:normal normal 16px/17px 'Liberation Sans', sans-serif;color:#000;right:860.61px;transform-origin:100% 50%;transform:scaleX(1.0500);">40</span>
<span class="t" style="top:549px;font:normal normal 16px/17px 'Liberation Sans', sans-serif;color:#000;right:806.11px;transform-origin:100% 50%;transform:scaleX(1.0500);">0</span>
<span class="t" style="top:549px;font:normal normal 16px/17px 'Liberation Sans', sans-serif;color:#000;right:750.41px;transform-origin:100% 50%;transform:scaleX(1.0500);">0</span>
<span class="t" style="top:549px;font:normal normal 16px/17px 'Liberation Sans', sans-serif;color:#000;right:683.81px;transform-origin:100% 50%;transform:scaleX(1.0500);">0</span>
<span class="t" style="top:549px;font:normal normal 16px/17px 'Liberation Sans', sans-serif;color:#000;right:617.31px;transform-origin:100% 50%;transform:scaleX(1.0500);">0</span>
<span class="t" style="top:549px;font:normal normal 16px/17px 'Liberation Sans', sans-serif;color:#000;right:551.11px;transform-origin:100% 50%;transform:scaleX(1.0500);">0</span>
<span class="t" style="top:549px;font:normal normal 16px/17px 'Liberation Sans', sans-serif;color:#000;right:439.51px;transform-origin:100% 50%;transform:scaleX(1.0500);">0,00</span>
<span class="t" style="top:549px;font:normal normal 16px/17px 'Liberation Sans', sans-serif;color:#000;right:317.51px;transform-origin:100% 50%;transform:scaleX(1.0500);">0,00</span>
<span class="t" style="top:549px;font:normal normal 16px/17px 'Liberation Sans', sans-serif;color:#000;right:185.11px;transform-origin:100% 50%;transform:scaleX(1.0500);">0,00</span>
<span class="t" style="top:549px;font:normal normal 16px/17px 'Liberation Sans', sans-serif;color:#000;right:76.81px;transform-origin:100% 50%;transform:scaleX(1.0500);">0,00</span>
<span class="t" style="top:578px;font:normal normal 16px/17px 'Liberation Sans', sans-serif;color:#000;left:150.98px;transform-origin:0 50%;transform:scaleX(0.9227);">LUX</span>
<span class="t" style="top:578px;font:normal normal 16px/17px 'Liberation Sans', sans-serif;color:#000;right:1426.51px;transform-origin:100% 50%;transform:scaleX(1.0500);">30</span>
<span class="t" style="top:578px;font:normal normal 16px/17px 'Liberation Sans', sans-serif;color:#000;right:1342.71px;transform-origin:100% 50%;transform:scaleX(1.0500);">0+0</span>
<span class="t" style="top:578px;font:normal normal 16px/17px 'Liberation Sans', sans-serif;color:#000;right:1293.71px;transform-origin:100% 50%;transform:scaleX(1.0500);">= 0</span>
<span class="t" style="top:578px;font:normal normal 16px/17px 'Liberation Sans', sans-serif;color:#000;right:1237.51px;transform-origin:100% 50%;transform:scaleX(1.0500);">0</span>
<span class="t" style="top:578px;font:normal normal 16px/17px 'Liberation Sans', sans-serif;color:#000;right:1182.11px;transform-origin:100% 50%;transform:scaleX(1.0500);">0</span>
<span class="t" style="top:578px;font:normal normal 16px/17px 'Liberation Sans', sans-serif;color:#000;right:1138.11px;transform-origin:100% 50%;transform:scaleX(1.0500);">0</span>
<span class="t" style="top:578px;font:normal normal 16px/17px 'Liberation Sans', sans-serif;color:#000;right:1082.41px;transform-origin:100% 50%;transform:scaleX(1.0500);">0</span>
<span class="t" style="top:578px;font:normal normal 16px/17px 'Liberation Sans', sans-serif;color:#000;right:1016.11px;transform-origin:100% 50%;transform:scaleX(1.0500);">0,00</span>
<span class="t" style="top:578px;font:normal normal 16px/17px 'Liberation Sans', sans-serif;color:#000;right:971.81px;transform-origin:100% 50%;transform:scaleX(1.0500);">0</span>
<span class="t" style="top:578px;font:normal normal 16px/17px 'Liberation Sans', sans-serif;color:#000;right:927.11px;transform-origin:100% 50%;transform:scaleX(1.0500);">0</span>
<span class="t" style="top:578px;font:normal normal 16px/17px 'Liberation Sans', sans-serif;color:#000;right:860.61px;transform-origin:100% 50%;transform:scaleX(1.0500);">30</span>
<span class="t" style="top:578px;font:normal normal 16px/17px 'Liberation Sans', sans-serif;color:#000;right:806.11px;transform-origin:100% 50%;transform:scaleX(1.0500);">0</span>
<span class="t" style="top:578px;font:normal normal 16px/17px 'Liberation Sans', sans-serif;color:#000;right:750.41px;transform-origin:100% 50%;transform:scaleX(1.0500);">0</span>
<span class="t" style="top:578px;font:normal normal 16px/17px 'Liberation Sans', sans-serif;color:#000;right:683.81px;transform-origin:100% 50%;transform:scaleX(1.0500);">0</span>
<span class="t" style="top:578px;font:normal normal 16px/17px 'Liberation Sans', sans-serif;color:#000;right:617.31px;transform-origin:100% 50%;transform:scaleX(1.0500);">0</span>
<span class="t" style="top:578px;font:normal normal 16px/17px 'Liberation Sans', sans-serif;color:#000;right:551.11px;transform-origin:100% 50%;transform:scaleX(1.0500);">0</span>
<span class="t" style="top:578px;font:normal normal 16px/17px 'Liberation Sans', sans-serif;color:#000;right:439.51px;transform-origin:100% 50%;transform:scaleX(1.0500);">0,00</span>
<span class="t" style="top:578px;font:normal normal 16px/17px 'Liberation Sans', sans-serif;color:#000;right:317.51px;transform-origin:100% 50%;transform:scaleX(1.0500);">0,00</span>
<span class="t" style="top:578px;font:normal normal 16px/17px 'Liberation Sans', sans-serif;color:#000;right:185.11px;transform-origin:100% 50%;transform:scaleX(1.0500);">0,00</span>
<span class="t" style="top:578px;font:normal normal 16px/17px 'Liberation Sans', sans-serif;color:#000;right:76.81px;transform-origin:100% 50%;transform:scaleX(1.0500);">0,00</span>
<span class="t" style="top:607px;font:normal normal 16px/17px 'Liberation Sans', sans-serif;color:#000;right:1426.51px;transform-origin:100% 50%;transform:scaleX(1.0500);">239</span>
<span class="t" style="top:607px;font:normal normal 16px/17px 'Liberation Sans', sans-serif;color:#000;right:1342.71px;transform-origin:100% 50%;transform:scaleX(1.0500);">0+3</span>
<span class="t" style="top:607px;font:normal normal 16px/17px 'Liberation Sans', sans-serif;color:#000;right:1293.71px;transform-origin:100% 50%;transform:scaleX(1.0500);">= 3</span>
<span class="t" style="top:607px;font:normal normal 16px/17px 'Liberation Sans', sans-serif;color:#000;right:1237.51px;transform-origin:100% 50%;transform:scaleX(1.0500);">9</span>
<span class="t" style="top:607px;font:normal normal 16px/17px 'Liberation Sans', sans-serif;color:#000;right:1182.11px;transform-origin:100% 50%;transform:scaleX(1.0500);">4</span>
<span class="t" style="top:607px;font:normal normal 16px/17px 'Liberation Sans', sans-serif;color:#000;right:1138.11px;transform-origin:100% 50%;transform:scaleX(1.0500);">2</span>
<span class="t" style="top:607px;font:normal normal 16px/17px 'Liberation Sans', sans-serif;color:#000;right:1082.41px;transform-origin:100% 50%;transform:scaleX(1.0500);">14</span>
<span class="t" style="top:607px;font:normal normal 16px/17px 'Liberation Sans', sans-serif;color:#000;right:1016.11px;transform-origin:100% 50%;transform:scaleX(1.0500);">5,86</span>
<span class="t" style="top:607px;font:normal normal 16px/17px 'Liberation Sans', sans-serif;color:#000;right:971.81px;transform-origin:100% 50%;transform:scaleX(1.0500);">0</span>
<span class="t" style="top:607px;font:normal normal 16px/17px 'Liberation Sans', sans-serif;color:#000;right:927.11px;transform-origin:100% 50%;transform:scaleX(1.0500);">1</span>
<span class="t" style="top:607px;font:normal normal 16px/17px 'Liberation Sans', sans-serif;color:#000;right:860.61px;transform-origin:100% 50%;transform:scaleX(1.0500);">225</span>
<span class="t" style="top:607px;font:normal normal 16px/17px 'Liberation Sans', sans-serif;color:#000;right:806.11px;transform-origin:100% 50%;transform:scaleX(1.0500);">0</span>
<span class="t" style="top:607px;font:normal normal 16px/17px 'Liberation Sans', sans-serif;color:#000;right:750.41px;transform-origin:100% 50%;transform:scaleX(1.0500);">5</span>
<span class="t" style="top:607px;font:normal normal 16px/17px 'Liberation Sans', sans-serif;color:#000;right:683.81px;transform-origin:100% 50%;transform:scaleX(1.0500);">17</span>
<span class="t" style="top:607px;font:normal normal 16px/17px 'Liberation Sans', sans-serif;color:#000;right:617.31px;transform-origin:100% 50%;transform:scaleX(1.0500);">6</span>
<span class="t" style="top:607px;font:normal normal 16px/17px 'Liberation Sans', sans-serif;color:#000;right:551.11px;transform-origin:100% 50%;transform:scaleX(1.0500);">26</span>
<span class="t" style="top:607px;font:normal normal 16px/17px 'Liberation Sans', sans-serif;color:#000;right:439.51px;transform-origin:100% 50%;transform:scaleX(1.0500);">49 000,00</span>
<span class="t" style="top:607px;font:normal normal 16px/17px 'Liberation Sans', sans-serif;color:#000;right:317.51px;transform-origin:100% 50%;transform:scaleX(1.0500);">65 132,00</span>
<span class="t" style="top:607px;font:normal normal 16px/17px 'Liberation Sans', sans-serif;color:#000;right:185.11px;transform-origin:100% 50%;transform:scaleX(1.0500);">114 132,00</span>
<span class="t" style="top:607px;font:normal normal 16px/17px 'Liberation Sans', sans-serif;color:#000;right:77.91px;transform-origin:100% 50%;transform:scaleX(1.0500);">3 500,00</span>
<span class="t" style="top:650px;font:normal normal 16px/17px 'Liberation Sans', sans-serif;color:#000;right:1432.11px;transform-origin:100% 50%;transform:scaleX(1.0500);">239</span>
<span class="t" style="top:650px;font:normal normal 16px/17px 'Liberation Sans', sans-serif;color:#000;right:1342.71px;transform-origin:100% 50%;transform:scaleX(1.0500);">0+3</span>
<span class="t" style="top:650px;font:normal normal 16px/17px 'Liberation Sans', sans-serif;color:#000;right:1293.71px;transform-origin:100% 50%;transform:scaleX(1.0500);">= 3</span>
<span class="t" style="top:650px;font:normal normal 16px/17px 'Liberation Sans', sans-serif;color:#000;right:1237.51px;transform-origin:100% 50%;transform:scaleX(1.0500);">9</span>
<span class="t" style="top:650px;font:normal normal 16px/17px 'Liberation Sans', sans-serif;color:#000;right:1182.11px;transform-origin:100% 50%;transform:scaleX(1.0500);">4</span>
<span class="t" style="top:650px;font:normal normal 16px/17px 'Liberation Sans', sans-serif;color:#000;right:1138.11px;transform-origin:100% 50%;transform:scaleX(1.0500);">2</span>
<span class="t" style="top:650px;font:normal normal 16px/17px 'Liberation Sans', sans-serif;color:#000;right:1082.41px;transform-origin:100% 50%;transform:scaleX(1.0500);">14</span>
<span class="t" style="top:650px;font:normal normal 16px/17px 'Liberation Sans', sans-serif;color:#000;right:1016.11px;transform-origin:100% 50%;transform:scaleX(1.0500);">5,86</span>
<span class="t" style="top:650px;font:normal normal 16px/17px 'Liberation Sans', sans-serif;color:#000;right:971.81px;transform-origin:100% 50%;transform:scaleX(1.0500);">0</span>
<span class="t" style="top:650px;font:normal normal 16px/17px 'Liberation Sans', sans-serif;color:#000;right:927.11px;transform-origin:100% 50%;transform:scaleX(1.0500);">1</span>
<span class="t" style="top:650px;font:normal normal 16px/17px 'Liberation Sans', sans-serif;color:#000;right:860.61px;transform-origin:100% 50%;transform:scaleX(1.0500);">225</span>
<span class="t" style="top:650px;font:normal normal 16px/17px 'Liberation Sans', sans-serif;color:#000;right:806.11px;transform-origin:100% 50%;transform:scaleX(1.0500);">0</span>
<span class="t" style="top:650px;font:normal normal 16px/17px 'Liberation Sans', sans-serif;color:#000;right:750.41px;transform-origin:100% 50%;transform:scaleX(1.0500);">5</span>
<span class="t" style="top:650px;font:normal normal 16px/17px 'Liberation Sans', sans-serif;color:#000;right:683.81px;transform-origin:100% 50%;transform:scaleX(1.0500);">17</span>
<span class="t" style="top:650px;font:normal normal 16px/17px 'Liberation Sans', sans-serif;color:#000;right:617.31px;transform-origin:100% 50%;transform:scaleX(1.0500);">6</span>
<span class="t" style="top:650px;font:normal normal 16px/17px 'Liberation Sans', sans-serif;color:#000;right:551.11px;transform-origin:100% 50%;transform:scaleX(1.0500);">26</span>
<span class="t" style="top:650px;font:normal normal 16px/17px 'Liberation Sans', sans-serif;color:#000;right:440.91px;transform-origin:100% 50%;transform:scaleX(1.0500);">49 000,00</span>
<span class="t" style="top:650px;font:normal normal 16px/17px 'Liberation Sans', sans-serif;color:#000;right:317.51px;transform-origin:100% 50%;transform:scaleX(1.0500);">65 132,00</span>
<span class="t" style="top:650px;font:normal normal 16px/17px 'Liberation Sans', sans-serif;color:#000;right:185.11px;transform-origin:100% 50%;transform:scaleX(1.0500);">114 132,00</span>
<span class="t" style="top:650px;font:normal normal 16px/17px 'Liberation Sans', sans-serif;color:#000;right:77.91px;transform-origin:100% 50%;transform:scaleX(1.0500);">3 500,00</span>
<span class="t" style="top:466px;font:normal normal 19.5px/22px 'Liberation Sans', sans-serif;color:#a86cba;left:678.30px;transform-origin:0 50%;z-index:6;">общая строка для многокомпонентных комнат (не для самих компонентов)</span>
</body></html>
